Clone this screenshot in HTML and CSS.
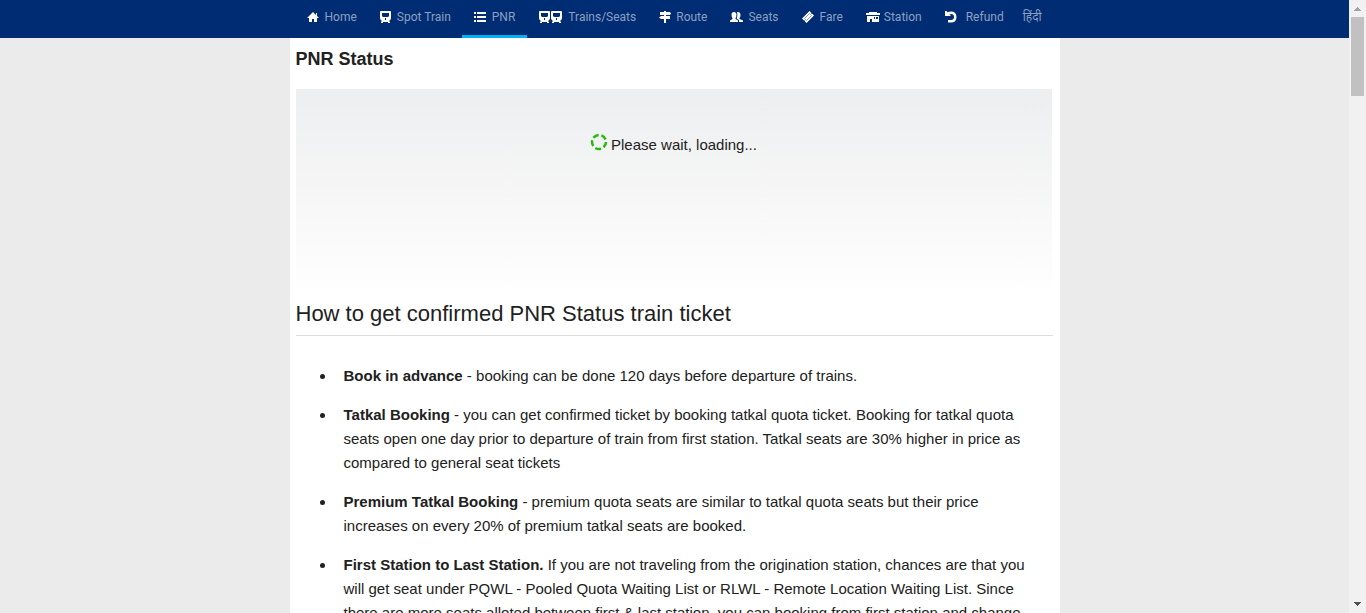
FILE: index.html
```html
<!DOCTYPE html>
<html lang="en">
<head>
<meta charset="utf-8">
<meta name="viewport" content="width=device-width, initial-scale=1">
<title>PNR Status</title>
<link rel="stylesheet" href="styles.css">
</head>
<body>
<div class="page">
  <header class="topbar">
    <nav class="nav" aria-label="Main">
      <a class="nav-link nav-link-wide" href="#home"><svg class="icon" viewBox="0 0 12 12"><path d="M6 1 0 7h2v4h3V8h2v3h3V7h2L10 5V2H9v2z"/></svg>Home</a>
      <a class="nav-link" href="#spot"><svg class="icon" viewBox="0 0 12 12"><path fill-rule="evenodd" d="M1 0h9q1 0 1 1v6q0 2-2 3l1 1v1H8V11H3v1H1v-1l1-1Q0 9 0 7V1q0-1 1-1zM2 2v3l1 1h5l1-1V2zm3 5v2h1V7z"/></svg>Spot Train</a>
      <a class="nav-link nav-link-wide active" href="#pnr" aria-current="page"><svg class="icon" viewBox="0 0 12 12"><path d="M0 1h2v2H0zM3 1h9v2H3zM0 5h2v2H0zM3 5h9v2H3zM0 9h2v2H0zM3 9h9v2H3z"/></svg>PNR</a>
      <a class="nav-link" href="#trains"><svg class="icon icon-double" viewBox="0 0 24 12"><path id="train" fill-rule="evenodd" d="M1 0h9q1 0 1 1v6q0 2-2 3l1 1v1H8V11H3v1H1v-1l1-1Q0 9 0 7V1q0-1 1-1zM2 2v3l1 1h5l1-1V2zm3 5v2h1V7z"/><use href="#train" x="12"/></svg>Trains/Seats</a>
      <a class="nav-link" href="#route"><svg class="icon" viewBox="0 0 12 12"><path d="M5 0h2v1h4l1 1.500L11 4H7v1h4v3H7v4H5V8H2L0 6.500 2 5h3V4H1V1h4z"/></svg>Route</a>
      <a class="nav-link" href="#seats"><svg class="icon icon-seats" viewBox="0 0 13 12"><path d="M4 1q2 0 2.500 2Q6.500 6 5.500 7v1L8 9.500V11H0V9.500L2.500 8V7Q1.500 6 1.500 3.500 1.500 1 4 1zM7 1q3.500-.5 3.500 3 0 2-1 3v1l3.500 1.500V11H9V9L6.800 7.800Q8 4 7 1z"/></svg>Seats</a>
      <a class="nav-link nav-link-wide" href="#fare"><svg class="icon" viewBox="0 0 12 12"><path d="M7.500 0 9 1.500Q9 3 10.500 3L12 4.500 4.500 12 3 10.500Q3 9 1.500 9L0 7.500z"/><path class="groove" d="M7.500 2.500 9.500 4.500 4.500 9.500 2.500 7.500z"/></svg>Fare</a>
      <a class="nav-link nav-link-station" href="#station"><svg class="icon icon-station" viewBox="0 0 14 11"><path fill-rule="evenodd" d="M3 0h8v1h3v2H0V1h3zM1 4h12v6H6V7H4v3H1zM8 5v2h1V5zm2 0v2h2V5z"/></svg>Station</a>
      <a class="nav-link nav-link-refund" href="#refund"><svg class="icon" viewBox="0 0 12 12"><path d="M0 0h1.500l1 1.300Q4 .5 6 .5 11.500 .5 11.500 6T6 11.500H3V9h3q3 0 3-3T6 3q-1 0-1.500.5L6 5H0z"/></svg>Refund</a>
      <a class="nav-link nav-link-hindi" href="#hindi" lang="hi">हिंदी</a>
    </nav>
  </header>
  <main class="content">
    <h1 class="title">PNR Status</h1>
    <section class="loading" aria-live="polite">
      <svg class="spinner" viewBox="0 0 18 18"><circle cx="9" cy="9" r="7"/></svg>
      <span>Please wait, loading...</span>
    </section>
    <h2 class="subtitle">How to get confirmed PNR Status train ticket</h2>
    <ul class="tips">
      <li><b>Book in advance</b> - booking can be done 120 days before departure of trains.</li>
      <li><b>Tatkal Booking</b> - you can get confirmed ticket by booking tatkal quota ticket. Booking for tatkal quota seats open one day prior to departure of train from first station. Tatkal seats are 30% higher in price as compared to general seat tickets</li>
      <li><b>Premium Tatkal Booking</b> - premium quota seats are similar to tatkal quota seats but their price increases on every 20% of premium tatkal seats are booked.</li>
      <li><b>First Station to Last Station.</b> If you are not traveling from the origination station, chances are that you will get seat under PQWL - Pooled Quota Waiting List or RLWL - Remote Location Waiting List. Since there are more seats alloted between first &amp; last station, you can booking from first station and change</li>
    </ul>
  </main>
</div>
<div class="scrollbar" aria-hidden="true">
  <svg class="arrow arrow-up" viewBox="0 0 7 4"><path d="M3 0h1v1h1v1h1v1h1v1H0V3h1V2h1V1h1z"/></svg>
  <div class="thumb"></div>
  <svg class="arrow arrow-down" viewBox="0 0 7 4"><path d="M0 0h7v1H6v1H5v1H4v1H3V3H2V2H1V1H0z"/></svg>
</div>
</body>
</html>
```
FILE: styles.css
```css
* { box-sizing: border-box; }

body {
  display: flex;
  height: 100vh;
  margin: 0;
  overflow: hidden;
  background: #ebebeb;
  color: #212121;
  font: 15px/24px "Liberation Sans", Arial, sans-serif;
}

.page { flex: 1; min-width: 0; overflow: hidden; }

.topbar { background: #002c73; }

.nav {
  display: flex;
  max-width: 760px;
  height: 38px;
  margin: 0 auto;
}

.nav-link {
  display: flex;
  align-items: center;
  gap: 5px;
  padding: 0 11px 1px 12px;
  border-bottom: 3px solid transparent;
  color: #8ba0c2;
  font: 12px/16px Roboto, "Noto Sans", sans-serif;
  text-decoration: none;
  white-space: nowrap;
}

.nav-link.active { padding-right: 12px; border-bottom-color: #03b0f3; }
.nav-link-wide { gap: 6px; }
.nav-link-station { gap: 4px; }
.nav-link-refund { gap: 9px; }
.nav-link-hindi { padding-left: 8px; }

.icon { flex: none; width: 12px; height: 12px; fill: #fff; }
.icon .groove { fill: none; stroke: #8ba0c2; stroke-width: 1; }
.icon-double { width: 24px; }
.icon-seats { width: 13px; }
.icon-station { width: 14px; height: 11px; }

.content {
  max-width: 770px;
  min-height: 100vh;
  margin: 0 auto;
  padding: 9px 7px 0 6px;
  background: #fff;
}

.title { margin: 0 0 17px; font-size: 18px; line-height: 25px; }

.loading {
  display: flex;
  justify-content: center;
  gap: 3px;
  height: 200px;
  margin-right: 1px;
  padding-top: 44px;
  background: linear-gradient(#edeeef, #fefefe);
}

.spinner { width: 18px; height: 18px; }
.spinner circle {
  fill: none;
  stroke: #27b80c;
  stroke-width: 2.500;
  stroke-dasharray: 6 2.800;
}

.subtitle {
  margin: 7px 0 28px;
  padding-bottom: 3px;
  border-bottom: 1px solid #ddd;
  font-size: 22px;
  font-weight: 400;
  line-height: 36px;
}

.tips { margin: 0; padding: 0 19px 0 40px; }
.tips li { margin-bottom: 15px; padding-left: 8px; }

.scrollbar {
  display: flex;
  flex: none;
  flex-direction: column;
  align-items: center;
  width: 17px;
  padding: 7px 0;
  background: #f1f1f1;
}

.arrow { width: 7px; height: 4px; }
.arrow-up { fill: #a3a3a3; }
.arrow-down { margin-top: auto; fill: #505050; }
.thumb { width: 13px; height: 79px; margin-top: 6px; background: #c1c1c1; }
```
